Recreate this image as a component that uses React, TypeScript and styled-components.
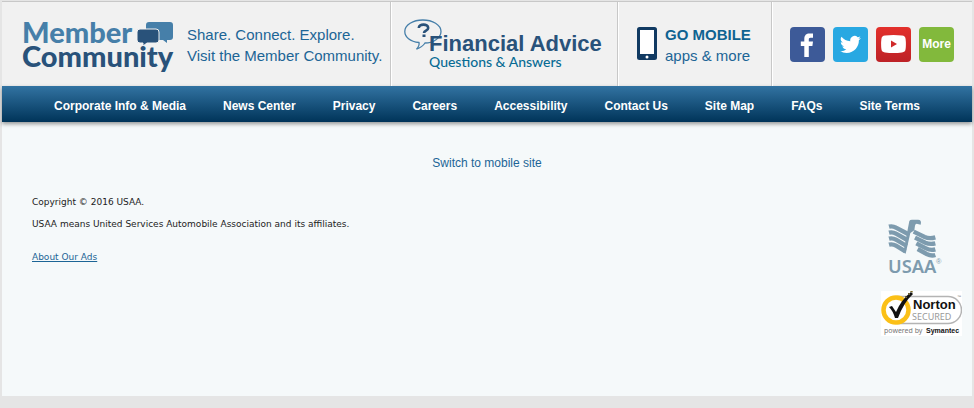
import React from "react";
import styled, { createGlobalStyle } from "styled-components";

const GlobalStyle = createGlobalStyle`
  body {
    margin: 0;
    background: #e5e5e5;
    font-family: "Liberation Sans", Arial, sans-serif;
  }
  a {
    color: #1c6596;
    text-decoration: none;
  }
`;

const Footer = styled.footer`
  margin: 1px 2px 12px;
  background: #f5f9fa;
`;

const PromoRow = styled.div`
  display: grid;
  grid-template-columns: 389fr 227fr 154fr 200fr;
  height: 84px;
  border-top: 1px solid #c8c8c8;
  background: #f1f1f1;
`;

const Promo = styled.div<{ $inset: number }>`
  display: flex;
  align-items: center;
  box-sizing: border-box;
  padding-left: ${(p) => p.$inset}px;
  border-right: 1px solid #c8c8c8;
  box-shadow: inset 1px 0 #fff;
  white-space: nowrap;

  &:first-child {
    box-shadow: none;
  }

  &:last-child {
    border-right: 0;
  }
`;

const PromoLink = styled.a<{ $gap: number }>`
  display: flex;
  align-items: center;
  gap: ${(p) => p.$gap}px;
  font-size: 15px;
  line-height: 21px;
`;

const PromoText = styled.span`
  padding-top: 2px;
`;

const CommunityLogo = styled.span`
  position: relative;
  display: block;
  width: 151px;
  font-family: Lato, sans-serif;
  font-weight: 900;
  font-size: 29px;
  line-height: 24px;
  color: #29527a;
`;

const LogoTop = styled.span`
  display: block;
  color: #467fa9;
`;

const LogoBubbles = styled.svg`
  position: absolute;
  top: 2px;
  right: 0;
`;

const Strong = styled.strong`
  display: block;
  color: #0f6391;
`;

const AdviceLink = styled.a`
  position: relative;
  display: block;
  padding: 14px 0 0 25px;
`;

const AdviceBubble = styled.svg`
  position: absolute;
  top: 0;
  left: 0;
`;

const AdviceTitle = styled.span`
  position: relative;
  display: block;
  font-size: 22px;
  line-height: 22px;
  font-weight: 700;
  color: #29527a;
`;

const AdviceSub = styled.span`
  display: block;
  font-family: Lato, sans-serif;
  font-weight: 500;
  font-size: 14px;
  line-height: 14px;
  color: #086b94;
`;

const SocialList = styled.div`
  display: flex;
  gap: 8px;
`;

const SocialLink = styled.a<{ $fill: string }>`
  display: flex;
  align-items: center;
  justify-content: center;
  width: 35px;
  height: 35px;
  border-radius: 4px;
  background: ${(p) => p.$fill};
  color: #fff;
  font-size: 12px;
  font-weight: 700;
`;

const Nav = styled.nav`
  display: flex;
  align-items: center;
  justify-content: center;
  gap: 37px;
  height: 36px;
  background: linear-gradient(#3273a2, #003459);
  box-shadow: 0 2px 4px rgba(0, 0, 0, 0.4);
  white-space: nowrap;
`;

const NavLink = styled.a`
  color: #fff;
  font-size: 12px;
  line-height: 18px;
  font-weight: 700;
  padding-top: 3px;
`;

const MobileSwitch = styled.div`
  padding: 32px 0 20px;
  text-align: center;
  font-size: 12px;
  line-height: 18px;
`;

const Legal = styled.div`
  display: flex;
  justify-content: space-between;
  padding: 0 10px 60px 30px;
`;

const LegalText = styled.div`
  padding-top: 4px;
  font-family: "DejaVu Sans", Verdana, sans-serif;
  font-size: 9px;
  line-height: 12px;
  color: #222;
`;

const Paragraph = styled.p`
  margin: 0 0 10px;
`;

const AdsLink = styled.a`
  display: inline-block;
  margin-top: 11px;
  text-decoration: underline;
`;

const Seals = styled.div`
  display: flex;
  flex-direction: column;
  align-items: flex-start;
  gap: 10px;
  padding-top: 27px;
`;

const UsaaLogo = styled.svg`
  display: block;
  margin-left: 7px;
`;

const NortonSeal = styled.svg`
  display: block;
  background: #fff;
`;

const navItems = [
  "Corporate Info & Media",
  "News Center",
  "Privacy",
  "Careers",
  "Accessibility",
  "Contact Us",
  "Site Map",
  "FAQs",
  "Site Terms",
];

export default function App() {
  return (
    <>
      <GlobalStyle />
      <Footer>
        <PromoRow>
          <Promo $inset={20}>
            <PromoLink href="#community" $gap={14}>
              <CommunityLogo>
                <LogoTop>Member</LogoTop>
                Community
                <LogoBubbles width="36" height="24" viewBox="0 0 36 24" aria-hidden="true">
                  <path
                    d="M12 0h21q3 0 3 3v12q0 3-3 3h-3v3l-4-3H12q-3 0-3-3V3q0-3 3-3z"
                    fill="#467fa9"
                  />
                  <path
                    d="M3 7h16q3 0 3 3v8q0 3-3 3h-9l-4 3v-3H3q-3 0-3-3v-8q0-3 3-3z"
                    fill="#29527a"
                    stroke="#f1f1f1"
                    strokeWidth="1"
                  />
                </LogoBubbles>
              </CommunityLogo>
              <PromoText>
                Share. Connect. Explore.
                <br />
                Visit the Member Community.
              </PromoText>
            </PromoLink>
          </Promo>
          <Promo $inset={13}>
            <AdviceLink href="#advice">
              <AdviceBubble width="40" height="34" viewBox="0 0 40 34" aria-hidden="true">
                <path
                  d="M15 23.500C6 22.500.8 18 .8 12.500.8 6 9 1 18.800 1S37 6 37 12.500 29 24 21 24c-2 3-5 5-8.500 6.200 2-2.200 3-4.500 2.500-6.700z"
                  fill="none"
                  stroke="#467fa9"
                  strokeWidth="1.300"
                />
                <path
                  d="M14.800 9c0-4.500 9.400-4.500 9.400 0 0 2.800-4.200 2.500-4.200 5"
                  fill="none"
                  stroke="#29527a"
                  strokeWidth="2.600"
                />
                <rect x="18.500" y="15.500" width="3" height="2.500" fill="#29527a" />
              </AdviceBubble>
              <AdviceTitle>Financial Advice</AdviceTitle>
              <AdviceSub>Questions &amp; Answers</AdviceSub>
            </AdviceLink>
          </Promo>
          <Promo $inset={19}>
            <PromoLink href="#mobile" $gap={8}>
              <svg width="20" height="34" viewBox="0 0 20 34" aria-hidden="true">
                <rect width="20" height="33" rx="2.500" fill="#113a62" />
                <rect x="3" y="3" width="14" height="24" fill="#fff" />
                <circle cx="10" cy="30" r="1.500" fill="#fff" />
              </svg>
              <PromoText>
                <Strong>GO MOBILE</Strong>
                apps &amp; more
              </PromoText>
            </PromoLink>
          </Promo>
          <Promo $inset={18}>
            <SocialList>
              <SocialLink href="#facebook" aria-label="Facebook" $fill="#3d5a98">
                <svg width="35" height="35" viewBox="0 0 35 35" aria-hidden="true">
                  <path
                    d="M14.300 30V19H10.800v-4.500h3.500V12c0-3.700 2-5.500 5.200-5.500H23v4.200h-2.500c-1.300 0-1.700.7-1.700 1.800v2h4.200l-.6 4.500h-3.600v11z"
                    fill="#fff"
                  />
                </svg>
              </SocialLink>
              <SocialLink href="#twitter" aria-label="Twitter" $fill="#28a8e2">
                <svg width="21" height="21" viewBox="0 0 24 24" aria-hidden="true">
                  <path
                    d="M23.950 4.570a10 10 0 0 1-2.820.780 4.960 4.960 0 0 0 2.160-2.720 9.900 9.900 0 0 1-3.120 1.180 4.920 4.920 0 0 0-8.380 4.480A13.930 13.930 0 0 1 1.640 3.160a4.920 4.920 0 0 0 1.520 6.570 4.900 4.900 0 0 1-2.230-.610v.060a4.920 4.920 0 0 0 3.950 4.830 5 5 0 0 1-2.210.080 4.940 4.940 0 0 0 4.600 3.420A9.870 9.870 0 0 1 0 19.540a13.990 13.990 0 0 0 7.550 2.210c9.050 0 14-7.500 14-13.980 0-.210 0-.420-.020-.630a9.940 9.940 0 0 0 2.420-2.570z"
                    fill="#fff"
                  />
                </svg>
              </SocialLink>
              <SocialLink
                href="#youtube"
                aria-label="YouTube"
                $fill="linear-gradient(#e3302b, #bd2227)"
              >
                <svg width="25" height="18" viewBox="0 0 25 18" aria-hidden="true">
                  <path
                    d="M4 .6Q12.500-.4 21 .6 24.300.8 24.600 4q.6 5 0 10-.3 3.200-3.600 3.400-8.500 1-17 0Q.7 17.200.4 14q-.6-5 0-10Q.7.8 4 .6z"
                    fill="#fff"
                  />
                  <path d="M10 5.500v7l6-3.500z" fill="#d02a2a" />
                </svg>
              </SocialLink>
              <SocialLink href="#more" $fill="#82b93c">
                More
              </SocialLink>
            </SocialList>
          </Promo>
        </PromoRow>
        <Nav>
          {navItems.map((item) => (
            <NavLink href="#nav" key={item}>
              {item}
            </NavLink>
          ))}
        </Nav>
        <MobileSwitch>
          <a href="#switch">Switch to mobile site</a>
        </MobileSwitch>
        <Legal>
          <LegalText>
            <Paragraph>Copyright © 2016 USAA.</Paragraph>
            <Paragraph>
              USAA means United Services Automobile Association and its affiliates.
            </Paragraph>
            <AdsLink href="#ads">About Our Ads</AdsLink>
          </LegalText>
          <Seals>
            <UsaaLogo
              width="56"
              height="62"
              viewBox="0 0 168 186"
              fill="#7d9bae"
              role="img"
              aria-label="USAA"
            >
              <path d="M64 6Q66 2 72 2h18q12 0 8 15l-12-3q-4 0-5 6l-2 14-12 8-14 62-7-4z" />
              <g fill="none" stroke="#7d9bae" strokeWidth="13">
                <path d="M3 23Q14 20 24 26L60 45" />
                <path d="M3 41Q14 38 24 44L58 63" />
                <path d="M3 59Q14 56 24 62L56 81" />
                <path d="M3 77Q14 74 24 80L52 97" />
                <path d="M77 38L110 54Q124 60 142 55" />
                <path d="M81 56L112 71Q126 77 142 73" />
                <path d="M85 73L114 88Q128 95 142 91" />
                <path d="M89 90L116 105Q130 112 142 108" />
              </g>
              <text
                x="0"
                y="162"
                fontFamily="Noto Sans, sans-serif"
                fontSize="55"
                fontWeight="600"
              >
                USAA
              </text>
              <text x="144" y="136" fontFamily="Liberation Sans, sans-serif" fontSize="22">
                ®
              </text>
            </UsaaLogo>
            <NortonSeal
              width="81"
              height="45"
              viewBox="0 0 81 45"
              role="img"
              aria-label="Norton Secured, powered by Symantec"
            >
              <path
                d="M16 5.500h51a12.500 12.500 0 0 1 0 27H16"
                fill="#fff"
                stroke="#b4b4b4"
                strokeWidth="1.500"
              />
              <circle cx="15" cy="19" r="12.500" fill="#fff" stroke="#fbc017" strokeWidth="4.500" />
              <path d="M8 16l3-1 4 6Q20 9 30 1l2 2q-9 8-15 24h-3Q12 20 8 16z" fill="#111" />
              <path d="M24 5l2 2M27 2l2 2M29 0l3 1" stroke="#7a6620" strokeWidth="1" />
              <text
                x="32"
                y="18"
                fontFamily="Liberation Sans, sans-serif"
                fontSize="13"
                fontWeight="700"
                fill="#111"
              >
                Norton
              </text>
              <text
                x="31"
                y="29"
                fontFamily="Noto Sans, sans-serif"
                fontSize="9"
                fill="#999"
              >
                SECURED
              </text>
              <text x="3" y="42" fontFamily="Noto Sans, sans-serif" fontSize="7" fill="#777">
                powered by
              </text>
              <text
                x="45"
                y="42"
                fontFamily="Liberation Sans, sans-serif"
                fontSize="7"
                fontWeight="700"
                fill="#111"
              >
                Symantec
              </text>
              <text x="76" y="7" fontFamily="Liberation Sans, sans-serif" fontSize="4" fill="#777">
                ™
              </text>
            </NortonSeal>
          </Seals>
        </Legal>
      </Footer>
    </>
  );
}
